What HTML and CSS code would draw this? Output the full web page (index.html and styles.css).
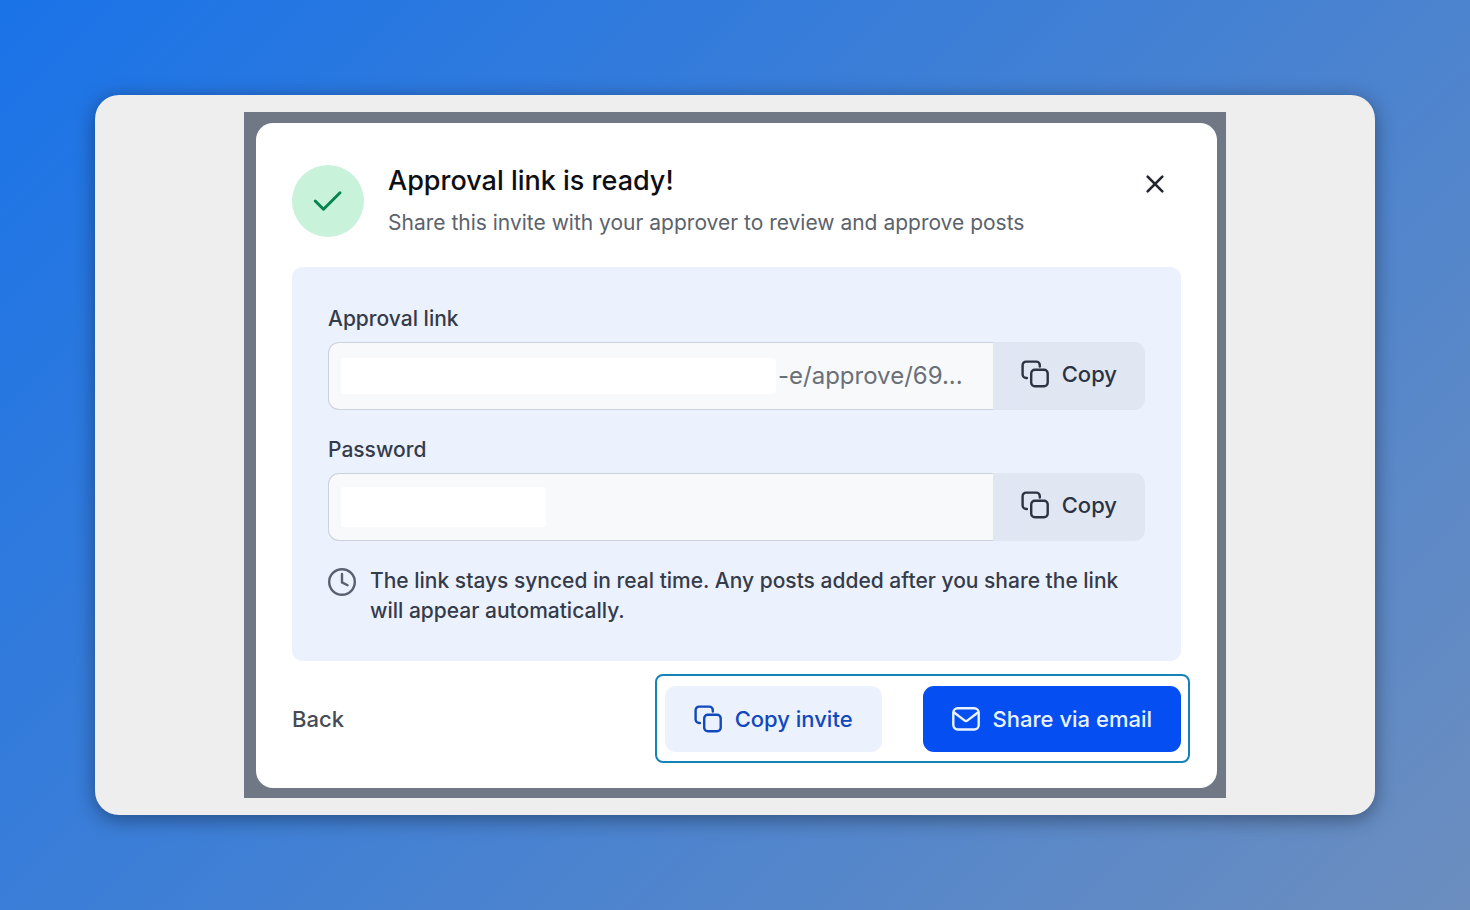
FILE: index.html
```html
<!DOCTYPE html>
<html lang="en">
<head>
  <meta charset="UTF-8">
  <meta name="viewport" content="width=device-width, initial-scale=1.0">
  <title>Approval link</title>
  <link rel="stylesheet" href="styles.css">
</head>
<body>
  <svg class="sprite" aria-hidden="true">
    <symbol id="copy" viewBox="0 0 28 28">
      <rect x="10.2" y="9.8" width="16.5" height="16.5" rx="3.6"/>
      <path d="M18.8 6.6V5.2a3.6 3.6 0 0 0-3.6-3.6H5.2a3.6 3.6 0 0 0-3.6 3.6v9.2a3.6 3.6 0 0 0 3.6 3.6h.7"/>
    </symbol>
    <symbol id="mail" viewBox="0 0 28 28">
      <rect x="1.3" y="3.3" width="25.4" height="21.2" rx="4.4"/>
      <path d="M1.8 7.2l10.6 8.2a2.6 2.6 0 0 0 3.2 0l10.6-8.2"/>
    </symbol>
    <symbol id="clock" viewBox="0 0 28 28">
      <circle cx="14" cy="14" r="12.8"/>
      <path d="M14 6v8.4l5.6 2.8"/>
    </symbol>
  </svg>

  <main class="frame">
    <div class="backdrop">
      <section class="dialog" role="dialog" aria-labelledby="title">
        <header class="header">
          <div class="badge">
            <svg viewBox="0 0 24 24"><path d="M20 6.5 9 17.5 3.5 12"/></svg>
          </div>
          <div class="heading">
            <h1 id="title">Approval link is ready!</h1>
            <p>Share this invite with your approver to review and approve posts</p>
          </div>
          <button class="close" type="button" aria-label="Close">
            <svg viewBox="0 0 24 24"><path d="M6.5 6.5l11 11M17.5 6.5l-11 11"/></svg>
          </button>
        </header>

        <div class="panel">
          <label for="link">Approval link</label>
          <div class="row">
            <div class="field">
              <span class="mask mask-link"></span>
              <input id="link" type="text" value="-e/approve/69..." readonly>
            </div>
            <button class="btn btn-copy" type="button">
              <svg class="icon"><use href="#copy"/></svg>Copy
            </button>
          </div>

          <label for="password">Password</label>
          <div class="row">
            <div class="field">
              <span class="mask mask-password"></span>
              <input id="password" type="text" value="" readonly>
            </div>
            <button class="btn btn-copy" type="button">
              <svg class="icon"><use href="#copy"/></svg>Copy
            </button>
          </div>

          <div class="note">
            <svg class="icon"><use href="#clock"/></svg>
            <p>The link stays synced in real time. Any posts added after you share the link will appear automatically.</p>
          </div>
        </div>

        <footer class="footer">
          <button class="back" type="button">Back</button>
          <div class="actions">
            <button class="btn btn-light" type="button">
              <svg class="icon"><use href="#copy"/></svg>Copy invite
            </button>
            <button class="btn btn-primary" type="button">
              <svg class="icon"><use href="#mail"/></svg>Share via email
            </button>
          </div>
        </footer>
      </section>
    </div>
  </main>
</body>
</html>
```
FILE: styles.css
```css
* {
  margin: 0;
  padding: 0;
  box-sizing: border-box;
}

body {
  display: flex;
  min-height: 100vh;
  padding: 95px;
  background: linear-gradient(135deg, #1a73e8, #6c8ebf);
  font-family: Inter, "Liberation Sans", sans-serif;
  font-size: 21px;
  line-height: 30px;
  color: #343b4a;
}

button,
input {
  font: inherit;
  color: inherit;
  border: none;
  background: none;
}

button {
  cursor: pointer;
}

svg {
  display: block;
  flex: none;
  fill: none;
  stroke: currentColor;
  stroke-width: 2.4;
  stroke-linecap: round;
  stroke-linejoin: round;
}

.sprite {
  position: absolute;
  width: 0;
  height: 0;
}

.icon {
  width: 28px;
  height: 28px;
}

.frame {
  flex: 1;
  display: flex;
  justify-content: center;
  align-items: center;
  padding: 17px;
  background: #eee;
  border-radius: 24px;
  box-shadow: 0 4px 20px rgba(0, 0, 0, 0.4);
}

.backdrop {
  width: 100%;
  max-width: 982px;
  padding: 11px 9px 10px 12px;
  background: #717885;
}

.dialog {
  padding: 42px 36px 25px;
  background: #fff;
  border-radius: 17px;
}

.header {
  display: flex;
  align-items: flex-start;
  gap: 24px;
  margin-bottom: 29px;
}

.badge {
  display: flex;
  flex: none;
  justify-content: center;
  align-items: center;
  width: 72px;
  height: 72px;
  border-radius: 50%;
  background: #c8f2da;
  color: #07854f;
}

.badge svg {
  width: 36px;
  height: 36px;
  stroke-width: 2;
}

.heading {
  flex: 1;
}

.heading h1 {
  margin-bottom: 11px;
  font-size: 27px;
  font-weight: 500;
  line-height: 32px;
  color: #0d0f14;
}

.heading p {
  color: #5c626b;
}

.close {
  padding: 3px;
  margin-right: 7px;
  color: #23262d;
}

.close svg {
  width: 32px;
  height: 32px;
  stroke-width: 2;
}

.panel {
  padding: 37px 36px 35px;
  background: #ecf1fe;
  border-radius: 10px;
}

.panel label {
  display: block;
  margin-bottom: 8px;
  font-weight: 500;
}

.row {
  display: flex;
  height: 68px;
  margin-bottom: 25px;
}

.field {
  flex: 1;
  display: flex;
  align-items: center;
  min-width: 0;
  padding: 0 12px;
  background: #f7f9fa;
  border: 1px solid #cbd2de;
  border-right: none;
  border-radius: 11px 0 0 11px;
}

.field input {
  flex: 1;
  min-width: 0;
  padding-left: 2px;
  font-size: 24px;
  color: #6a6f78;
  outline: none;
}

.mask {
  flex: none;
  background: #fff;
  border-radius: 3px;
}

.mask-link {
  width: 68%;
  height: 36px;
}

.mask-password {
  width: 32%;
  height: 40px;
}

.btn {
  display: flex;
  align-items: center;
  gap: 13px;
  padding: 0 29px;
  font-size: 22px;
  font-weight: 500;
  white-space: nowrap;
  border-radius: 11px;
}

.btn-copy {
  padding: 0 28px 4px;
  background: #e0e7f2;
  color: #2c3342;
  border-radius: 0 11px 11px 0;
}

.note {
  display: flex;
  gap: 14px;
  font-weight: 500;
}

.note .icon {
  margin-top: 2px;
  color: #5a6070;
}

.footer {
  display: flex;
  justify-content: space-between;
  align-items: center;
  margin-top: 13px;
}

.back {
  font-size: 22px;
  font-weight: 500;
  color: #464b55;
}

.actions {
  display: flex;
  gap: 41px;
  margin-right: -9px;
  padding: 10px 7px 9px 8px;
  border: 2px solid #1583b8;
  border-radius: 8px;
}

.actions .btn {
  height: 66px;
}

.btn-light {
  background: #ecf1fe;
  color: #1048bd;
}

.btn-primary {
  background: #044ef2;
  color: #e9f3ff;
}
```
